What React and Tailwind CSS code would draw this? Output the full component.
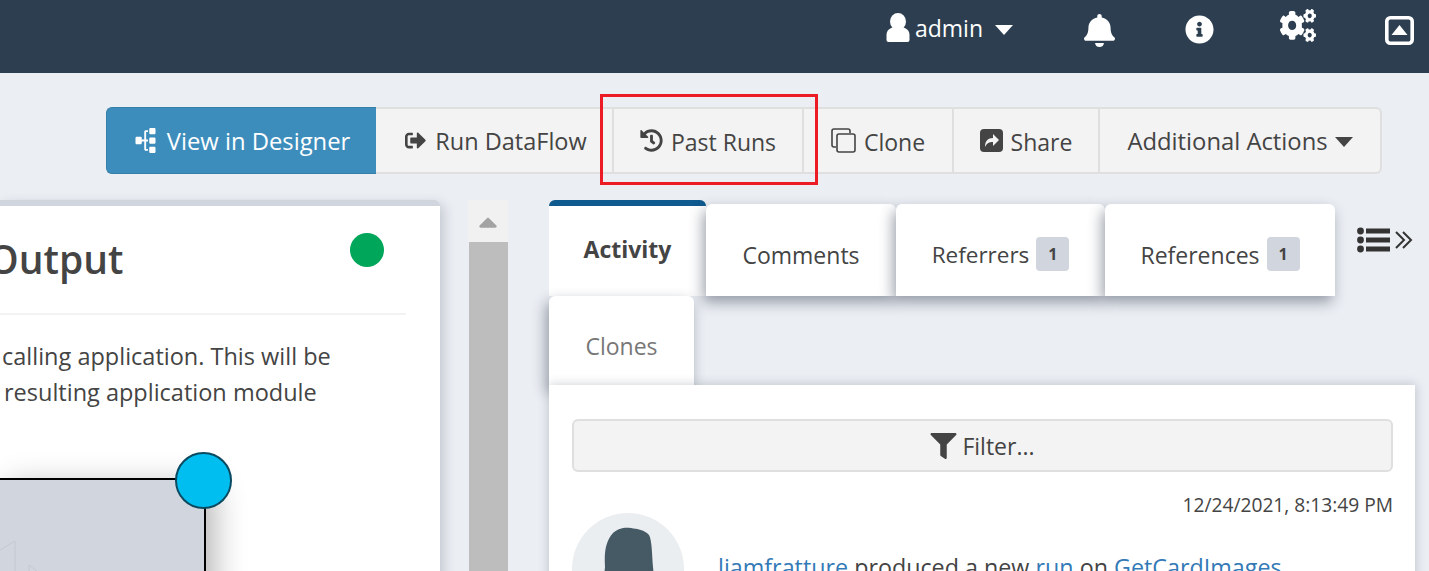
import React from "react";
import {
  FaBell,
  FaCaretUp,
  FaCogs,
  FaFilter,
  FaHistory,
  FaInfoCircle,
  FaSignOutAlt,
  FaSitemap,
} from "react-icons/fa";

const font = "font-['Open_Sans','Noto_Sans',sans-serif]";

const CloneIcon = () => (
  <svg width="25" height="25" viewBox="0 0 25 25" fill="none" stroke="#444" strokeWidth="1.6">
    <path d="M5 19H3a2 2 0 0 1-2-2V3a2 2 0 0 1 2-2h14a2 2 0 0 1 2 2v2" />
    <rect x="6" y="6" width="18" height="18" rx="2" />
  </svg>
);

const ShareIcon = () => (
  <svg width="23" height="23" viewBox="0 0 23 23">
    <rect width="23" height="23" rx="4" fill="#444" />
    <path d="M5 18c0-6 3-9 8-9V5l6 6-6 6v-4c-4 0-6 1-8 5z" fill="#f3f3f3" />
  </svg>
);

const UserIcon = () => (
  <svg width="24" height="29" viewBox="0 0 23 29" fill="currentColor">
    <ellipse cx="11.5" cy="8.5" rx="8" ry="8.5" />
    <path d="M0 27v-5c0-5 4-7 7-8h9c3 1 7 3 7 8v5a2 2 0 0 1-2 2H2a2 2 0 0 1-2-2z" />
  </svg>
);

const Caret = ({ className }) => (
  <svg className={className} width="18" height="10" viewBox="0 0 18 10" fill="currentColor">
    <path d="M0 0h18L9 10z" />
  </svg>
);

const CollapseIcon = () => (
  <svg width="29" height="29" viewBox="0 0 29 29" fill="none">
    <rect x="1.8" y="1.8" width="25.4" height="25.4" rx="3.5" stroke="white" strokeWidth="3.6" />
    <path d="M14.5 9 22.5 19h-16z" fill="white" />
  </svg>
);

const ListIcon = () => (
  <svg width="56" height="26" viewBox="0 0 56 26" fill="#333">
    <circle cx="3.5" cy="4" r="3.4" />
    <circle cx="3.5" cy="13" r="3.4" />
    <circle cx="3.5" cy="22" r="3.4" />
    <rect x="9" y="1.5" width="24" height="5" />
    <rect x="9" y="10.5" width="24" height="5" />
    <rect x="9" y="19.5" width="24" height="5" />
    <path d="M39 5l8 8-8 8M46 5l8 8-8 8" fill="none" stroke="#333" strokeWidth="2" />
  </svg>
);

const Avatar = () => (
  <div className="w-[112px] h-[112px] rounded-full bg-[#ebeef1] shrink-0 overflow-hidden flex justify-center pt-[14px]">
    <svg width="54" height="70" viewBox="0 0 54 70" fill="#455a64">
      <path d="M4 40C3 24 5 14 12 6 17 1 24 0 30 1c6 1 14 2 18 7 3 5 3 20 4 32 1 8 1 20 1 30H1c0-10 2-20 3-30z" />
    </svg>
  </div>
);

const ToolButton = ({ className, children }) => (
  <div className={`h-full flex items-center justify-center gap-2 border-r-2 border-[#dfdfdf] ${className}`}>
    {children}
  </div>
);

const Tab = ({ className, children }) => (
  <div className={`relative bg-white rounded-t-[6px] shadow-[-3px_6px_14px_rgba(40,50,70,0.45)] flex items-center justify-center ${className}`}>
    {children}
  </div>
);

const Badge = () => (
  <span className="w-[33px] h-[34px] ml-[7px] rounded-[4px] bg-[#d1d5de] text-[#444] text-[16px] font-bold flex items-center justify-center">
    1
  </span>
);

export default function App() {
  return (
    <div className={`h-[571px] overflow-hidden bg-[#ebeef3] text-[#444] ${font}`}>
      {/* top bar */}
      <header className="h-[73px] bg-[#2c3e50] text-white flex justify-end">
        <div className="flex items-start pt-[13px] pr-[15px]">
          <UserIcon />
          <span className="ml-[5px] text-[23px] leading-[31px]">admin</span>
          <Caret className="ml-[12px] mt-[12px]" />
          <FaBell className="w-[31px] h-[33px] ml-[71px] mt-[1px]" preserveAspectRatio="none" />
          <FaInfoCircle className="w-[29px] h-[29px] ml-[70px] mt-[2px]" />
          <FaCogs className="w-[36px] h-[33px] ml-[66px] mt-[-4px]" preserveAspectRatio="none" />
          <div className="ml-[69px] mt-[3px]">
            <CollapseIcon />
          </div>
        </div>
      </header>

      {/* action toolbar */}
      <div className="flex justify-end pr-[47px] pt-[34px] text-[23px]">
        <div className="relative h-[67px] flex rounded-[6px] bg-[#f3f3f3] border-2 border-l-0 border-[#dfdfdf]">
          <div className="-my-[2px] w-[270px] flex items-center justify-center gap-[9px] bg-[#3c8dbc] border border-r-0 border-[#367fa9] rounded-l-[6px] text-white text-[23.8px]">
            <FaSitemap className="w-[25px] h-[25px] -rotate-90" />
            <span className="pt-[3px]">View in Designer</span>
          </div>
          <ToolButton className="w-[238px] text-[23.5px]">
            <FaSignOutAlt className="w-[23px] h-[21px] ml-[3px]" />
            <span className="pt-[3px]">Run DataFlow</span>
          </ToolButton>
          <ToolButton className="w-[190px]">
            <FaHistory className="w-[23px] h-[23px]" />
            <span className="pt-[3px]">Past Runs</span>
          </ToolButton>
          <ToolButton className="w-[150px]">
            <CloneIcon />
            <span className="pt-[3px]">Clone</span>
          </ToolButton>
          <ToolButton className="w-[146px]">
            <ShareIcon />
            <span className="pt-[3px]">Share</span>
          </ToolButton>
          <div className="w-[280px] flex items-center justify-center gap-[7px] text-[23.8px]">
            <span className="pt-[3px]">Additional Actions</span>
            <Caret className="mt-[3px]" />
          </div>
          <div className="absolute left-[494px] top-[-15px] w-[218px] h-[91px] border-[3px] border-[#ed1c24]"></div>
        </div>
      </div>

      <div className="flex pt-[26px]">
        {/* left card, runs off the page on the left */}
        <div className="w-[440px] h-[400px] shrink-0 bg-white border-t-[6px] border-[#d1d5de] rounded-tr-[6px] shadow-[4px_4px_12px_rgba(40,50,70,0.2)] overflow-hidden whitespace-nowrap">
          <div className="flex justify-between items-start h-[109px] mr-[34px] border-b-2 border-[#f3f3f3]">
            <h2 className="ml-[-12px] mt-[26px] text-[39px] leading-[54px] font-semibold">Output</h2>
            <div className="w-[34px] h-[34px] mt-[27px] mr-[22px] rounded-full bg-[#00a65a]"></div>
          </div>
          <p className="ml-[2px] mt-[23px] text-[23.5px] leading-[36px]">calling application. This will be</p>
          <p className="ml-[4px] text-[23.5px] leading-[36px]">resulting application module</p>
          <div className="relative mt-[68px] w-[206px] h-[120px] bg-[#d1d5de] border-t-2 border-r-2 border-black shadow-[8px_8px_30px_rgba(0,0,0,0.3)]">
            <svg className="absolute left-0 top-[60px]" width="40" height="40" viewBox="0 0 40 40" fill="none" stroke="#c4c8d2">
              <path d="M0 10 15 1v39M29 25v15M29 25l10 8" />
            </svg>
            <div className="absolute right-[-28px] top-[-28px] w-[57px] h-[57px] rounded-full bg-[#00bff0] border-2 border-[#0b4a60]"></div>
          </div>
        </div>

        {/* scrollbar */}
        <div className="w-[40px] ml-[28px] h-[371px] flex flex-col">
          <div className="h-[42px] bg-[#f1f1f1] flex justify-center items-start">
            <FaCaretUp className="w-[30px] h-[30px] mt-[7px] text-[#a3a3a3]" />
          </div>
          <div className="flex-1 ml-[1px] bg-[#bdbdbd]"></div>
        </div>

        {/* right column */}
        <div className="ml-[41px] w-[866px] shrink-0 text-[23px]">
          <div className="relative flex items-end h-[96px]">
            <div className="w-[157px] h-[96px] bg-white rounded-t-[6px] border-t-[6px] border-[#0f5a8f] pb-[3px] flex items-center justify-center font-bold">
              Activity
            </div>
            <Tab className="w-[190px] h-[92px] pt-[10px]">Comments</Tab>
            <Tab className="w-[209px] h-[92px] pt-[8px]">
              <span className="pt-[2px] text-[22.5px]">Referrers</span>
              <Badge />
            </Tab>
            <Tab className="w-[230px] h-[92px] pt-[8px]">
              <span className="pt-[2px]">References</span>
              <Badge />
            </Tab>
            <div className="ml-[22px] self-start mt-[27px]">
              <ListIcon />
            </div>
          </div>
          <Tab className="w-[145px] h-[89px] pt-[11px] text-[#777]">Clones</Tab>
          <div className="relative bg-white pl-[23px] pr-[22px] pt-[34px] h-[200px] shadow-[0_0_10px_rgba(40,50,70,0.25)]">
            <div className="h-[53px] flex items-center justify-center gap-[5px] bg-[#f3f3f3] border-2 border-[#dfdfdf] rounded-[6px]">
              <FaFilter className="w-[27px] h-[26px]" />
              <span className="pt-[2px]">Filter...</span>
            </div>
            <div className="mt-[20px] text-right text-[19.2px] leading-[26px]">12/24/2021, 8:13:49 PM</div>
            <div className="flex items-start -mt-[5px]">
              <Avatar />
              <p className="ml-[34px] mt-[38px] text-[23.3px] leading-[32px] whitespace-nowrap">
                <span className="text-[#337ab7]">liamfratture</span> produced a new{" "}
                <span className="text-[#337ab7]">run</span> on{" "}
                <span className="text-[#337ab7]">GetCardImages</span>
              </p>
            </div>
          </div>
        </div>
      </div>
    </div>
  );
}
